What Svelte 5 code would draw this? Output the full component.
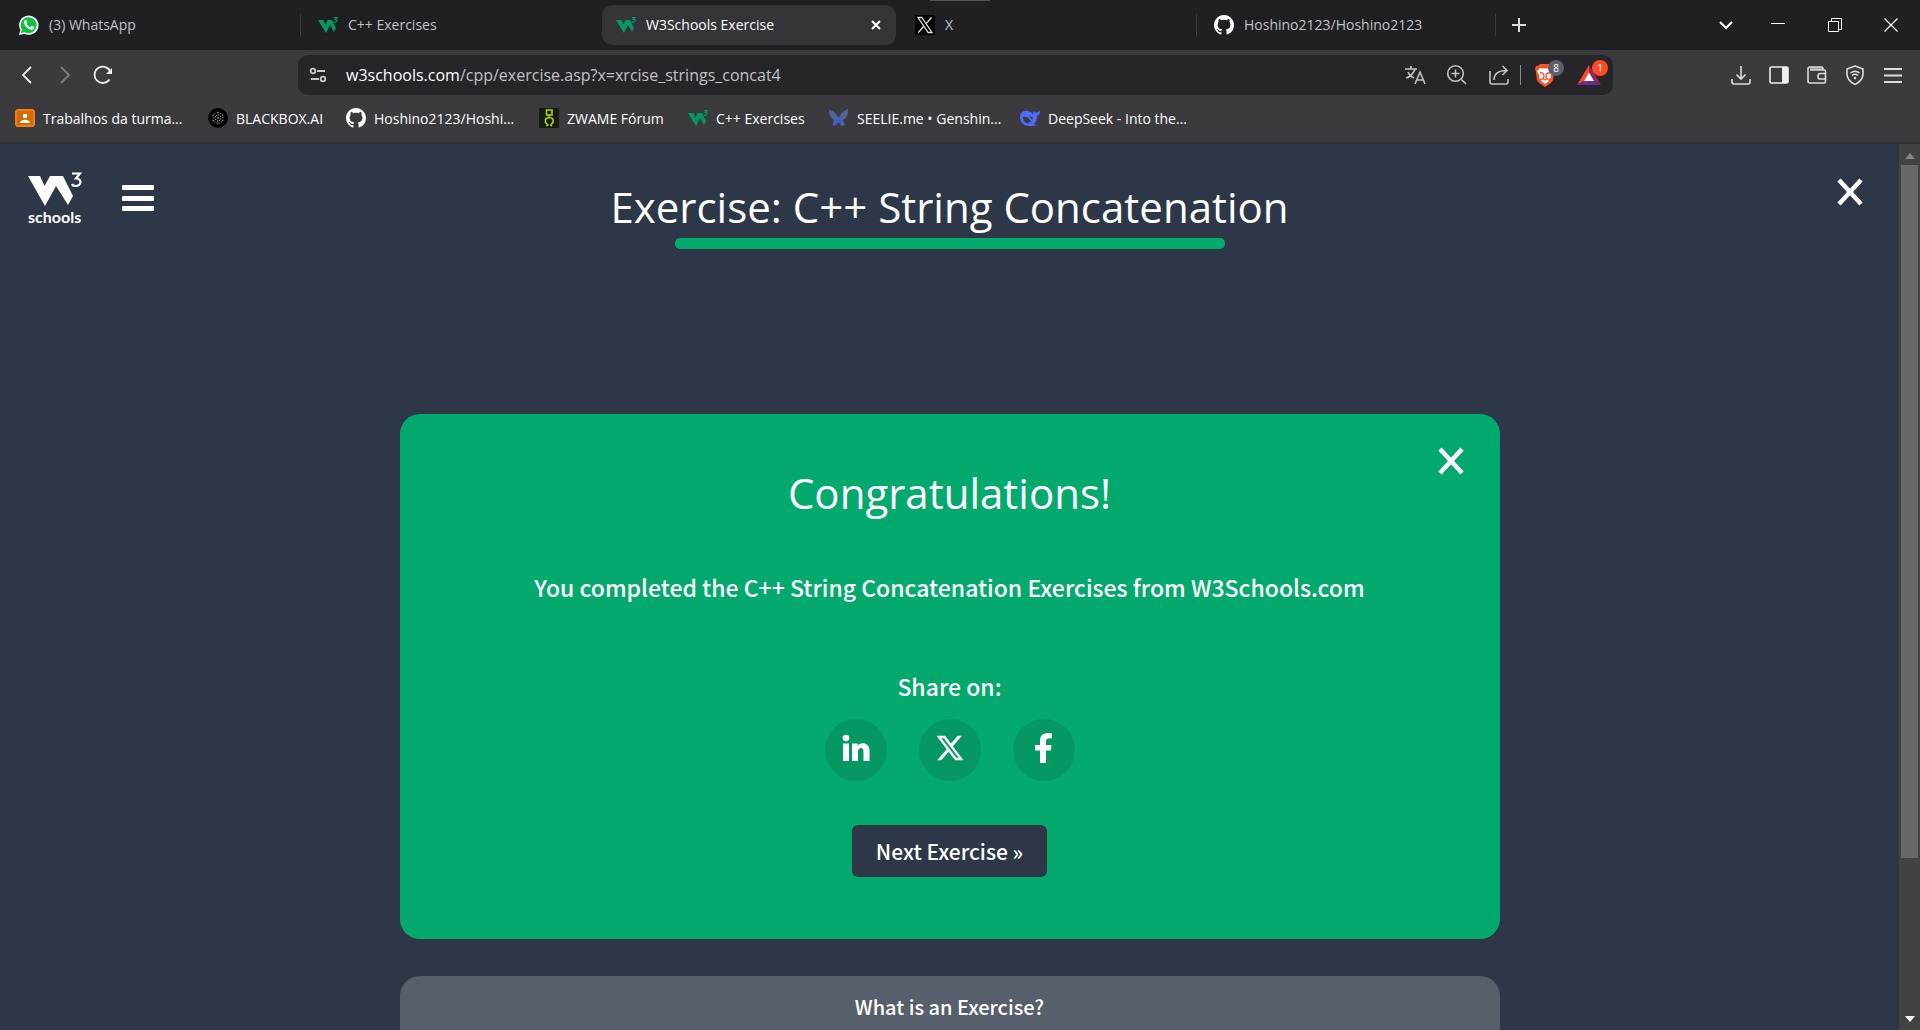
<script>
  const tabs = [
    { icon: 'whatsapp', title: '(3) WhatsApp' },
    { icon: 'w3', title: 'C++ Exercises' },
    { icon: 'w3', title: 'W3Schools Exercise', active: true },
    { icon: 'x', title: 'X' },
    { icon: 'github', title: 'Hoshino2123/Hoshino2123' }
  ];
  const bookmarks = [
    { icon: 'classroom', title: 'Trabalhos da turma...', width: 193 },
    { icon: 'blackbox', title: 'BLACKBOX.AI', width: 138 },
    { icon: 'github', title: 'Hoshino2123/Hoshi...', width: 193 },
    { icon: 'zwame', title: 'ZWAME Fórum', width: 149 },
    { icon: 'w3', title: 'C++ Exercises', width: 141 },
    { icon: 'seelie', title: 'SEELIE.me • Genshin...', width: 191 },
    { icon: 'deepseek', title: 'DeepSeek - Into the...', width: 180 }
  ];
</script>

{#snippet favicon(name)}
  {#if name === 'whatsapp'}
    <svg class="fav" viewBox="0 0 20 20"><path fill="#fff" d="M0 20l1.400-5A9.700 9.700 0 1 1 5.200 18.700z"/><path fill="#0fc143" d="M1.900 18.100l1-3.600a8 8 0 1 1 2.900 2.700z"/><path fill="#fff" d="M7.300 5.400c-.3-.5-.5-.5-.9-.5-1 .3-1.600 1.300-1.500 2.500.3 3.300 4.500 7.300 7.900 7.300 1.500 0 2.500-1 2.500-2.500 0-.3-2.500-1.500-2.800-1.400-.4.200-1 1.400-1.300 1.400-1-.2-3.400-2.400-3.700-3.500 0-.3.800-.9.900-1.300z"/></svg>
  {:else if name === 'w3'}
    <svg class="fav" viewBox="0 0 20 20"><path fill="#059862" d="M0 5h5.500l2 4.500 2-4.500H14l4 8-2 4-4-7-4 8z"/><path fill="none" stroke="#059862" stroke-width="1.200" d="M16 2.600h3l-1.600 1.700c2.400 0 2.200 2.900-.1 2.900-.8 0-1.200-.4-1.500-.9"/></svg>
  {:else if name === 'x'}
    <svg class="fav" viewBox="0 0 20 20"><path fill="#000" d="M0 0h20v20H0z"/><path fill="none" stroke="#ddd" stroke-width="1.300" d="M3 2.500h3.800L17 17.500h-3.800zM16.500 2.500l-5.800 6.600M9 11l-5.700 6.500"/></svg>
  {:else if name === 'github'}
    <svg class="fav" viewBox="0 0 16 16"><path fill="#fff" d="M8 0C3.580 0 0 3.580 0 8c0 3.540 2.290 6.530 5.470 7.590.4.070.55-.17.55-.38 0-.19-.01-.82-.01-1.490-2.010.37-2.530-.49-2.690-.94-.09-.23-.48-.94-.82-1.130-.28-.15-.68-.52-.01-.53.63-.01 1.080.58 1.230.82.72 1.210 1.870.87 2.330.66.07-.52.28-.87.51-1.070-1.780-.2-3.640-.89-3.640-3.950 0-.87.31-1.590.82-2.150-.08-.2-.36-1.020.08-2.120 0 0 .67-.21 2.200.82.64-.18 1.320-.27 2-.27s1.360.09 2 .27c1.530-1.040 2.200-.82 2.200-.82.44 1.100.16 1.920.08 2.120.51.56.82 1.270.82 2.150 0 3.070-1.870 3.750-3.650 3.950.29.25.54.73.54 1.480 0 1.070-.01 1.930-.01 2.200 0 .21.15.46.55.38A8.010 8.010 0 0 0 16 8c0-4.420-3.580-8-8-8z"/></svg>
  {:else if name === 'classroom'}
    <svg class="fav" viewBox="0 0 20 20"><path fill="#ef7f1a" d="M2 1h16l2 2v14l-2 2H2l-2-2V3z"/><path fill="#d66800" d="M2 3h16v14H2z"/><circle cx="10" cy="8" r="2.300" fill="#fff"/><path fill="#fff" d="M5 15c0-4.500 10-4.500 10 0z"/></svg>
  {:else if name === 'blackbox'}
    <svg class="fav" viewBox="0 0 20 20"><circle fill="#000" cx="10" cy="10" r="10"/><g fill="none" stroke="#aaa" stroke-dasharray="1 1.600"><path d="M10 4l5 3v6l-5 3-5-3V7zM10 6.500l3 2v3l-3 2-3-2v-3zM10 4v12M5 7l10 6M15 7L5 13"/></g></svg>
  {:else if name === 'zwame'}
    <svg class="fav" viewBox="0 0 20 20"><path fill="#171b18" d="M0 0h20v20H0z"/><path fill="none" stroke="#a8d900" stroke-width="1.600" d="M7.500 2h5.500v5H7.500zM10.200 7v3M7.500 18l1.300-1-2.300-2.500V12c0-3 7.500-3 7.500 0v2.500L11.700 17l1.300 1"/></svg>
  {:else if name === 'seelie'}
    <svg class="fav" viewBox="0 0 20 20"><path fill="#52629c" d="M0 2c4 0 7 3 9.500 8C12 5 15 2 19 1c.5 5-1 9-5 11l2 5-3 1-3.500-4L6 18l-2.500-1L5 12C2 10 0 7 0 2z"/><path fill="#3d5bd8" d="M9.500 10l3.500 4v4l-3.500-4L6 18v-4z"/></svg>
  {:else if name === 'deepseek'}
    <svg class="fav" viewBox="0 0 20 20"><path fill="#4d6bfe" d="M0 9c0-5 4-7 7.500-6l4 1.500 2 2.500c-1-2 .3-4 .8-4.500.4 1.500 1.200 2 2.200 2L20 3c0 3-1 4.500-3 5 0 4-1 6.500-3 8l2.500 1C11 19 0 19 0 9z"/><path fill="#3b3a3f" d="M3 9c3-1 6.500 1 8.500 5.500-1 0-1.700-.2-2.500-.8 0 1-.2 1.700-.7 1.900C5 15 3 12 3 9zM9.600 8.500c1.600-.4 3.200.8 3.400 2.700-1.700-.1-3-1.200-3.400-2.700z"/></svg>
  {/if}
{/snippet}

<div class="browser">
  <nav class="tabs" aria-label="Tabs">
    {#each tabs as tab, i}
      <div class="tab" class:active={tab.active} class:ruled={i === 0 || i === 3 || i === 4}>
        <button class="tab-main">{@render favicon(tab.icon)}<span>{tab.title}</span></button>
        {#if tab.active}
          <button class="tab-close" aria-label="Close tab"><svg width="10" height="10" viewBox="0 0 10 10"><path d="M1 1l8 8M9 1l-8 8" stroke="#fff" stroke-width="2"/></svg></button>
        {/if}
      </div>
    {/each}
    <button class="new-tab" aria-label="New tab"><svg width="14" height="14" viewBox="0 0 14 14"><path d="M7 0v14M0 7h14" stroke="#ddd" stroke-width="2"/></svg></button>
    <div class="window-controls">
      <button aria-label="Search tabs"><svg width="14" height="14" viewBox="0 0 14 14"><path d="M1 4l6 6 6-6" stroke="#fff" stroke-width="2.200"/></svg></button>
      <button aria-label="Minimize"><svg width="14" height="14" viewBox="0 0 14 14"><path d="M0 5.500h14" stroke="#fff"/></svg></button>
      <button aria-label="Restore"><svg width="14" height="14" viewBox="0 0 14 14"><path d="M.5 3.500h10v10H.5zM3.500 3V.5h10v11H11" stroke="#fff"/></svg></button>
      <button aria-label="Close window"><svg width="14" height="14" viewBox="0 0 14 14"><path d="M.5.500l13 13M13.500.500l-13 13" stroke="#fff" stroke-width="1.200"/></svg></button>
    </div>
  </nav>

  <div class="toolbar">
    <div class="history">
      <button aria-label="Back"><svg width="20" height="20" viewBox="0 0 20 20"><path d="M14 2L6 10l8 8" stroke="#eee" stroke-width="1.800"/></svg></button>
      <button aria-label="Forward"><svg width="20" height="20" viewBox="0 0 20 20"><path d="M6 2l8 8-8 8" stroke="#7d7c80" stroke-width="1.800"/></svg></button>
      <button aria-label="Reload"><svg width="20" height="20" viewBox="0 0 20 20"><path d="M16.500 14.500A8.200 8.200 0 1 1 17.500 7" stroke="#eee" stroke-width="1.800"/><path d="M19 3v6h-6z" fill="#eee"/></svg></button>
    </div>
    <div class="address">
      <button aria-label="Site information"><svg width="18" height="18" viewBox="0 0 18 18"><g stroke="#c8c7cc" stroke-width="1.800"><circle cx="4" cy="5" r="2.300"/><path d="M8 5h8M2 13h8"/><circle cx="14" cy="13" r="2.300"/></g></svg></button>
      <span class="url"><b>w3schools.com</b>/cpp/exercise.asp?x=xrcise_strings_concat4</span>
      <div class="address-tools">
        <button aria-label="Translate"><svg width="22" height="22" viewBox="0 0 22 22"><path d="M1 5h12M7 2v3M11 5c-1 4-5 8-9 9M4 8c1 3 4 5 6 6M11 20l5-12 5 12M12.700 16h6.600" stroke="#c2c1c6" stroke-width="1.600"/></svg></button>
        <button aria-label="Zoom"><svg width="22" height="22" viewBox="0 0 22 22"><path d="M15.500 15.500L20 20M9.500 5.500v8M5.500 9.500h8" stroke="#c2c1c6" stroke-width="1.600"/><circle cx="9.500" cy="9.500" r="7.800" stroke="#c2c1c6" stroke-width="1.600"/></svg></button>
        <button aria-label="Share"><svg width="22" height="22" viewBox="0 0 22 22"><path d="M2 7v11q0 2 2 2h14q2 0 2-2v-3M6 16c0-6 4-9.500 13-9.500M14.500 2L19 6.500 14.500 11" stroke="#c2c1c6" stroke-width="1.600"/></svg></button>
        <i class="divider"></i>
        <button class="badged" aria-label="Brave Shields"><svg width="24" height="24" viewBox="0 0 24 24"><path fill="#fb542b" d="M7 1h10l2 2 2-.3L22 6l-.7 2L20 17q-.5 2-2.500 3.200L12 24l-5.500-3.800Q4.500 19 4 17L2.700 8 2 6l1-3.300L5 3z"/><path fill="#fff" d="M7 5l3 .5h4L17 5l3 3.500-2.500 4 .5 2.500-3.500 1.500L16 18l-4 3-4-3 1.500-1.500L6 15l.5-2.500L4 8.500z"/><path fill="none" stroke="#fb542b" stroke-width="1.400" d="M7 9.500l3.500 1M17 9.500l-3.500 1M10.500 10.500l.5 3.500-1.500 1.500 2.500 1.500 2.500-1.500L13 14l.5-3.500"/></svg><em>8</em></button>
        <button class="badged" aria-label="Brave Rewards"><svg width="24" height="24" viewBox="0 0 24 24"><path fill="#ff4724" d="M12 2L0 22l7-4 5-8z"/><path fill="#9e1f63" d="M12 2l12 20-7-4-5-8z"/><path fill="#662d91" d="M0 22h24l-7-4H7z"/><path fill="#fff" d="M12 9.500L17 18H7z"/></svg><em class="alert">1</em></button>
      </div>
    </div>
    <div class="actions">
      <button aria-label="Downloads"><svg width="20" height="20" viewBox="0 0 20 20"><path d="M10 1v13M5.500 9.500L10 14l4.500-4.500M1 14v3q0 2 2 2h14q2 0 2-2v-3" stroke="#ddd" stroke-width="1.600"/></svg></button>
      <button aria-label="Sidebar"><svg width="20" height="20" viewBox="0 0 20 20"><rect x="1" y="2" width="18" height="16" rx="1.500" stroke="#eee" stroke-width="1.600"/><path fill="#eee" d="M13 2h6v16h-6z"/></svg></button>
      <button aria-label="Wallet"><svg width="20" height="20" viewBox="0 0 20 20"><path fill="#999" d="M3 2h13v3H3z"/><path d="M16 5V3.500Q16 2 14.500 2H3Q1 2 1 4v12q0 2 2 2h14q1.500 0 1.500-1.500v-10Q18.500 5 17 5H3M18.500 8.500H13q-2 0-2 2.700t2 2.800h5.500" stroke="#ddd" stroke-width="1.600"/></svg></button>
      <button aria-label="VPN"><svg width="20" height="20" viewBox="0 0 20 20"><path d="M10 1l8 3v5c0 5-3 8-8 10.500C5 17 2 14 2 9V4zM5.500 8q4.500-3.600 9 0M7 10.500q3-2.400 6 0" stroke="#ddd" stroke-width="1.600"/><circle cx="10" cy="13" r="1.300" fill="#ddd"/></svg></button>
      <button aria-label="Menu"><svg width="20" height="20" viewBox="0 0 20 20"><path d="M1 4h18M1 10.500h18M1 17h18" stroke="#ddd" stroke-width="1.800"/></svg></button>
    </div>
  </div>

  <nav class="bookmarks" aria-label="Bookmarks">
    {#each bookmarks as mark}
      <a href="#bookmark" style:width="{mark.width}px">{@render favicon(mark.icon)}<span>{mark.title}</span></a>
    {/each}
  </nav>

  <div class="viewport">
    <div class="page">
      <header>
        <div class="brand">
          <a class="logo" href="#home" aria-label="W3Schools home">
            <svg width="54" height="36" viewBox="0 0 54 36"><path fill="#fff" d="M0 4h12l4.500 10L22 4h13l10 20-5 9-12-19-11 20z"/><path fill="none" stroke="#fff" stroke-width="2.200" d="M44 1.500h8l-4 5c6.500 0 5.500 7.500-.5 7.500-2 0-3-.7-3.500-2"/></svg>
            <span>schools</span>
          </a>
          <button class="menu" aria-label="Menu"><i></i><i></i><i></i></button>
        </div>
        <h1>Exercise: C++ String Concatenation</h1>
        <button class="close" aria-label="Close exercise"><svg width="26" height="28" viewBox="0 0 26 28"><path d="M2 2l22 24M24 2L2 26" stroke="#fff" stroke-width="4.500"/></svg></button>
      </header>
      <div class="progress"></div>

      <main>
        <section class="result">
          <button class="close" aria-label="Close"><svg width="26" height="28" viewBox="0 0 26 28"><path d="M2 2l22 24M24 2L2 26" stroke="#fff" stroke-width="4.500"/></svg></button>
          <h2>Congratulations!</h2>
          <p>You completed the C++ String Concatenation Exercises from W3Schools.com</p>
          <p class="share-label">Share on:</p>
          <div class="share">
            <a href="#linkedin" aria-label="LinkedIn"><svg width="28" height="28" viewBox="0 0 28 28"><circle cx="4" cy="4" r="3.300"/><path d="M1 9.500h6V27H1zM10 9.500h5.500V12c2.500-4.500 12-4 12 4.500V27h-6v-9.500c0-5-5.500-4.500-5.500 0V27h-6z"/></svg></a>
            <a href="#x" aria-label="X"><svg width="30" height="30" viewBox="0 0 24 24"><path d="M18.244 2.250h3.308l-7.227 8.260 8.502 11.240H16.170l-5.214-6.817L4.990 21.750H1.680l7.730-8.835L1.254 2.250H8.080l4.713 6.231zm-1.161 17.520h1.833L7.084 4.126H5.117z"/></svg></a>
            <a href="#facebook" aria-label="Facebook"><svg width="20" height="30" viewBox="0 0 20 30"><path d="M6 30V17.500H1V12h5V8c0-6 4-9 12-7.500V5.500c-4-.5-6 0-6 3.500v3h5.500L17 17.500h-5V30z"/></svg></a>
          </div>
          <button class="next">Next Exercise »</button>
        </section>
        <section class="about"><h3>What is an Exercise?</h3></section>
      </main>
    </div>
    <div class="scrollbar" aria-hidden="true">
      <svg width="10" height="6" viewBox="0 0 10 6"><path fill="#868686" d="M5 0l5 6H0z"/></svg>
      <div class="track"><div class="thumb"></div></div>
      <svg width="10" height="6" viewBox="0 0 10 6"><path fill="#fff" d="M0 0h10L5 6z"/></svg>
    </div>
  </div>
</div>

<style>
  :global(body) { margin: 0; background: #2e3748; }
  * { box-sizing: border-box; }
  svg { display: block; fill: none; flex: none; }
  button { padding: 0; border: 0; background: none; color: inherit; font: inherit; display: flex; align-items: center; justify-content: center; cursor: pointer; }
  a { color: inherit; text-decoration: none; }
  .browser { height: 100vh; overflow: hidden; display: flex; flex-direction: column; font-family: "Open Sans", "Noto Sans", sans-serif; font-size: 14px; color: #fff; }
  .fav { width: 20px; height: 20px; }
  .tabs { flex: none; height: 50px; padding-left: 2px; display: flex; align-items: center; background: #201f24; color: #c3c2c7; position: relative; }
  .tabs::before { content: ""; position: absolute; left: 930px; top: 0; width: 60px; height: 1px; background: #555; }
  .tab { width: 299px; height: 40px; padding: 0 17px; display: flex; align-items: center; justify-content: space-between; border-right: 1px solid transparent; }
  .tab.ruled { border-image: linear-gradient(transparent 25%, #3b3a3f 25% 75%, transparent 75%) 1; }
  .tab.active { width: 294px; margin: 0 2px; padding: 0 15px 0 14px; border: 0; border-radius: 10px; background: #353439; color: #fff; }
  .tab-main { gap: 10px; }
  .tab-main span { padding-bottom: 2px; }
  .new-tab { width: 46px; height: 40px; }
  .window-controls { margin-left: auto; display: flex; padding-right: 1px; }
  .window-controls button { width: 57px; height: 40px; }
  .window-controls button:first-child { width: 46px; }
  .window-controls button:last-child { width: 56px; }
  .toolbar { flex: none; height: 50px; padding: 0 17px; display: flex; align-items: center; background: #3b3a3f; }
  .history { width: 281px; display: flex; gap: 18px; }
  .address { flex: 1; height: 40px; padding: 0 12px 0 11px; display: flex; align-items: center; border-radius: 10px; background: #26252a; }
  .url { margin-left: 19px; font-size: 16px; color: #c3c2c7; }
  .url b { font-weight: 400; color: #fff; }
  .address-tools { margin-left: auto; display: flex; align-items: center; gap: 20px; }
  .divider { width: 1px; height: 20px; margin: 0 -8px 0 -10px; background: #8a898e; }
  .badged { position: relative; }
  .badged em { position: absolute; left: 15px; top: -3px; width: 16px; height: 16px; border-radius: 8px; background: #5d5e6b; font-size: 10px; line-height: 16px; font-style: normal; text-align: center; }
  .badged em.alert { background: #ff4a24; }
  .actions { width: 290px; display: flex; justify-content: flex-end; gap: 18px; }
  .bookmarks { flex: none; height: 44px; padding: 0 15px 6px; display: flex; align-items: center; background: #3b3a3f; border-bottom: 2px solid #302f35; }
  .bookmarks a { display: flex; align-items: center; gap: 8px; white-space: nowrap; }
  .viewport { flex: 1; min-height: 0; display: flex; }
  .page { flex: 1; overflow: hidden; background: #2e3748; }
  header { display: grid; grid-template-columns: 1fr auto 1fr; height: 94px; padding: 28px 28px 0; }
  .brand { display: flex; gap: 40px; }
  .logo { width: 54px; height: 54px; font: 700 16px/18px Lato, sans-serif; }
  .menu { width: 32px; height: 26px; margin-top: 13px; flex-direction: column; justify-content: space-between; }
  .menu i { width: 32px; height: 5px; border-radius: 1px; background: #fff; }
  h1, h2 { margin: 0; font-weight: 400; font-size: 42px; line-height: 60px; }
  h1 { margin-top: 5px; }
  header .close { justify-self: end; align-self: start; margin: 6px 8px 0 0; }
  .progress { width: min(550px, 90%); height: 11px; margin: 0 auto; border-radius: 5px; background: #04aa6d; }
  main { max-width: 1100px; margin: 165px auto 0; display: flex; flex-direction: column; gap: 37px; font-family: "Noto Sans CJK JP", sans-serif; }
  .result { position: relative; padding: 49px 24px 62px; border-radius: 20px; background: #04aa6d; display: flex; flex-direction: column; align-items: center; text-align: center; }
  .result .close { position: absolute; right: 36px; top: 33px; }
  h2 { font-family: "Open Sans", sans-serif; }
  p { margin: 46px 0 0; font-size: 23px; line-height: 36px; font-weight: 500; }
  .share-label { margin-top: 63px; }
  .share { margin-top: 15px; display: flex; gap: 32px; }
  .share a { width: 62px; height: 62px; padding-bottom: 4px; display: flex; align-items: center; justify-content: center; border-radius: 50%; background: #059862; }
  .share svg { fill: #fff; }
  .next { margin-top: 44px; padding: 10px 24px; border-radius: 6px; background: #2e3748; font-size: 21px; line-height: 32px; font-weight: 500; }
  .about { padding: 16px 24px 40px; border-radius: 20px; background: #585f6c; text-align: center; }
  h3 { margin: 0; font-size: 20px; line-height: 30px; font-weight: 500; }
  .scrollbar { width: 21px; padding: 9px 0 8px; display: flex; flex-direction: column; align-items: center; gap: 6px; background: #424242; }
  .track { flex: 1; width: 17px; }
  .thumb { height: 82%; background: #686868; }
</style>
